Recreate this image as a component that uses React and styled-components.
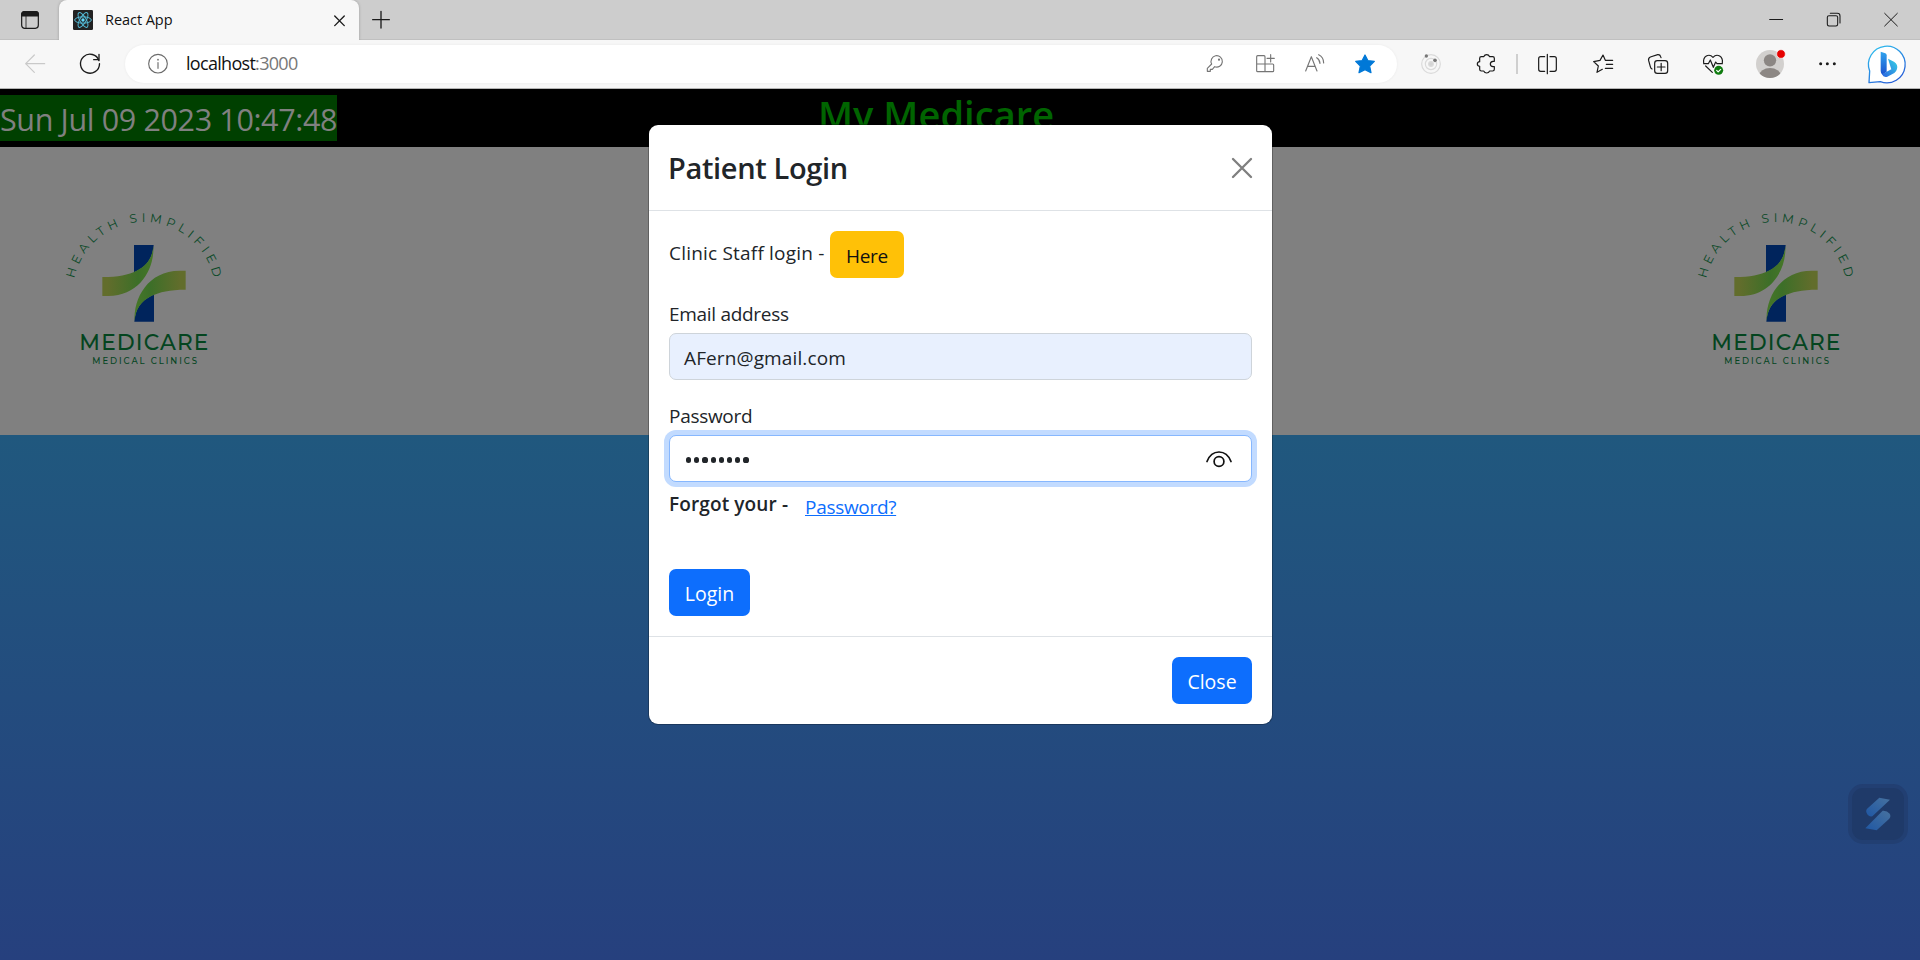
import React from "react";
import styled, { createGlobalStyle } from "styled-components";

const GlobalStyle = createGlobalStyle`
  * { box-sizing: border-box; }
  body {
    margin: 0;
    overflow: hidden;
    font-family: "Segoe UI", "Open Sans", "Noto Sans", sans-serif;
    color: #212529;
  }
  button, input { font-family: inherit; }
`;

const Window = styled.div`
  width: 1920px;
  height: 960px;
  display: flex;
  flex-direction: column;
  overflow: hidden;
`;

/* ---------- browser chrome ---------- */

const TabStrip = styled.div`
  height: 40px;
  flex: none;
  display: flex;
  align-items: stretch;
  background: #cdcdcd;
  box-shadow: inset 0 -1px 0 #c0c0c0;
`;

const TabActions = styled.div`
  width: 59px;
  display: flex;
  align-items: center;
  justify-content: center;
`;

const Tab = styled.div`
  width: 300px;
  height: 40px;
  display: flex;
  align-items: center;
  padding: 0 14px;
  background: #f7f7f7;
  border-radius: 8px 8px 0 0;
  box-shadow: 0 0 3px rgba(0, 0, 0, 0.25);
  clip-path: inset(0 -4px 0 -4px);
`;

const TabTitle = styled.span`
  flex: 1;
  margin-left: 12px;
  padding-bottom: 2px;
  font-size: 14.5px;
  letter-spacing: -0.05px;
  color: #111;
`;

const NewTab = styled.div`
  width: 43px;
  display: flex;
  align-items: center;
  justify-content: center;
`;

const WindowControls = styled.div`
  margin-left: auto;
  display: flex;
  align-items: center;
`;

const WindowButton = styled.div`
  width: 57.5px;
  display: flex;
  justify-content: center;
`;

const Toolbar = styled.div`
  height: 49px;
  flex: none;
  display: flex;
  align-items: center;
  background: #f7f7f7;
  border-bottom: 1px solid #b4b4b4;
`;

const Slot = styled.div`
  width: ${(p) => p.$w || 55}px;
  flex: none;
  height: 40px;
  display: flex;
  align-items: center;
  justify-content: center;
`;

const AddressBar = styled.div`
  flex: 1;
  height: 38px;
  margin-right: 6.5px;
  display: flex;
  align-items: center;
  padding: 0 7px 0 23px;
  border-radius: 19px;
  background: #fff;
  box-shadow: 0 0 3px rgba(0, 0, 0, 0.06);
`;

const Url = styled.span`
  flex: 1;
  margin-left: 18px;
  padding-bottom: 2px;
  font-size: 18px;
  letter-spacing: -0.7px;
  color: #111;
`;

const Port = styled.span`
  color: #777;
`;

const Divider = styled.div`
  width: 2px;
  height: 20px;
  margin: 0 2.5px;
  background: #cfcfcf;
`;

const Svg = styled.svg`
  display: block;
  flex: none;
  overflow: visible;
`;

function Icon({ color = "#1b1b1b", stroke = 3.6, size = 20, children }) {
  return (
    <Svg width={size} height={size} viewBox="0 0 60 60" fill="none" stroke={color} strokeWidth={stroke} strokeLinecap="round" strokeLinejoin="round">
      {children}
    </Svg>
  );
}

const ReactFavicon = () => (
  <Svg width="20" height="20" viewBox="0 0 60 60" fill="none" stroke="#53b8d3" strokeWidth="3">
    <rect width="60" height="60" rx="4" fill="#222" stroke="none" />
    <ellipse cx="30" cy="30" rx="25" ry="9.5" />
    <ellipse cx="30" cy="30" rx="25" ry="9.5" transform="rotate(60 30 30)" />
    <ellipse cx="30" cy="30" rx="25" ry="9.5" transform="rotate(120 30 30)" />
    <circle cx="30" cy="30" r="5" fill="#61dafb" stroke="none" />
  </Svg>
);

const BingLogo = () => (
  <Svg width="39" height="39" viewBox="0 0 117 117">
    <defs>
      <linearGradient id="bubble" x1="0" y1="0" x2="0.6" y2="1">
        <stop offset="0" stopColor="#2fc6f0" />
        <stop offset="1" stopColor="#2560d8" />
      </linearGradient>
      <linearGradient id="stem" x1="0" y1="0" x2="0" y2="1">
        <stop offset="0" stopColor="#2fa4ee" />
        <stop offset="1" stopColor="#1b53cf" />
      </linearGradient>
      <linearGradient id="bowl" x1="1" y1="0" x2="0" y2="1">
        <stop offset="0" stopColor="#35d3e6" />
        <stop offset="1" stopColor="#2a63e0" />
      </linearGradient>
    </defs>
    <path d="M3 113 L5 78 A55 55 0 1 1 37 110 Z" fill="#fff" stroke="url(#bubble)" strokeWidth="4" strokeLinejoin="round" />
    <path d="M38 20 L52 25 Q56 27 56 31 V80 L43 89 Q38 84 38 78 Z" fill="url(#stem)" />
    <path d="M60 41 L78 50 Q91 58 87 72 Q85 80 79 84 L58 95 Q46 98 42 88 L70 73 L66 61 Z" fill="url(#bowl)" />
  </Svg>
);

function BrowserTabs() {
  return (
    <TabStrip>
      <TabActions>
        <Icon>
          <rect x="5" y="5" width="50" height="50" rx="9" />
          <path d="M5 18 V13 Q5 5 13 5 H47 Q55 5 55 13 V18 Z" fill="#1b1b1b" />
          <path d="M18 18 V55" strokeWidth="2.5" />
        </Icon>
      </TabActions>
      <Tab>
        <ReactFavicon />
        <TabTitle>React App</TabTitle>
        <Icon size={11}>
          <path d="M4 6 L56 58 M56 6 L4 58" strokeWidth="7.5" />
        </Icon>
      </Tab>
      <NewTab>
        <Icon stroke={4}>
          <path d="M30 4 V54 M5 29 H55" />
        </Icon>
      </NewTab>
      <WindowControls>
        <WindowButton>
          <Icon stroke={3}><path d="M11 28.500 H50" /></Icon>
        </WindowButton>
        <WindowButton>
          <Icon stroke={3.2}>
            <rect x="10" y="17" width="31" height="31" rx="5" />
            <path d="M19 10 H40 Q48 10 48 18 V39" />
          </Icon>
        </WindowButton>
        <WindowButton>
          <Icon stroke={3}><path d="M11 10 L49 48 M49 10 L11 48" /></Icon>
        </WindowButton>
      </WindowControls>
    </TabStrip>
  );
}

function BrowserToolbar() {
  return (
    <Toolbar>
      <Slot $w={70}>
        <Icon color="#c9c9c9"><path d="M59 29 H2 M28 3 L2 29 L28 55" /></Icon>
      </Slot>
      <Slot $w={40}>
        <Icon stroke={4}>
          <path d="M57 20 A28.500 28.500 0 1 0 58.500 29" />
          <path d="M57 1 V17 H41" />
        </Icon>
      </Slot>
      <Slot $w={15} />
      <AddressBar>
        <Icon color="#6b6b6b" stroke={3.4}>
          <circle cx="30" cy="29" r="28" />
          <path d="M30 26 V43" />
          <circle cx="30" cy="17" r="1" fill="#6b6b6b" />
        </Icon>
        <Url>localhost<Port>:3000</Port></Url>
        <Slot $w={50}>
          <Icon color="#757575" stroke={3.4}>
            <path d="M20 30 L7 43 V52 H16 V46 H22 L29 38 A17 17 0 1 0 20 30 Z" />
            <circle cx="42" cy="17" r="1.6" />
          </Icon>
        </Slot>
        <Slot $w={50}>
          <Icon color="#757575" stroke={3.4}>
            <path d="M30 53 V8 Q30 5 27 5 H8 Q5 5 5 8 V50 Q5 53 8 53 H53 Q56 53 56 50 V33 Q56 30 53 30 H5 M47 2 V24 M36 13 H58" />
          </Icon>
        </Slot>
        <Slot $w={50}>
          <Icon color="#757575" stroke={3.4}>
            <path d="M2 51 L19 8 L36 51 M8 37 H30 M35 11 Q44 16 45 28 M41 2 Q56 9 56 27" />
          </Icon>
        </Slot>
        <Slot $w={50}>
          <Icon color="#0078d7">
            <path d="M30 3 L39 20 L58 22 L44 36 L48 56 L30 47 L12 56 L16 36 L2 22 L21 20 Z" fill="#0078d7" />
          </Icon>
        </Slot>
      </AddressBar>
      <Slot>
        <Icon color="#dadada" stroke={3.5}>
          <circle cx="30" cy="30" r="28" />
          <circle cx="30" cy="30" r="17" />
          <circle cx="30" cy="30" r="7" fill="#d4d4d4" />
          <circle cx="16" cy="6" r="5" fill="#777" stroke="none" />
          <circle cx="42" cy="19" r="5.5" fill="#777" stroke="none" />
        </Icon>
      </Slot>
      <Slot>
        <Icon>
          <path d="M16 8 H23 Q26 2 32 2 Q38 2 41 8 H50 Q55 8 55 13 V22 H51 Q43 23 43 30 Q43 37 51 38 H55 V46 Q55 51 50 51 H41 Q38 57 32 57 Q26 57 23 51 H16 Q11 51 11 46 V37 Q4 36 4 30 Q4 24 11 23 V13 Q11 8 16 8 Z" />
        </Icon>
      </Slot>
      <Divider />
      <Slot>
        <Icon>
          <path d="M20 8 H8 Q2 8 2 14 V46 Q2 52 8 52 H20 M28 1 V59 M36 8 H49 Q55 8 55 14 V46 Q55 52 49 52 H36" />
        </Icon>
      </Slot>
      <Slot>
        <Icon>
          <path d="M45 19 H37 L30 3 L21 19 L2 23 L16 36 L12 55 L28 46 M37 19 H59 M40 31 H59 M37 43 H59" />
        </Icon>
      </Slot>
      <Slot>
        <Icon>
          <rect x="20" y="20" width="39" height="38" rx="8" />
          <path d="M39.500 28 V50 M28 39 H51 M12 45 Q8 43 7 38 L2 20 Q0 12 7 9 L29 2 Q36 1 38 8 L39 11" />
        </Icon>
      </Slot>
      <Slot>
        <Icon>
          <path d="M2 26 Q0 12 10 6 Q21 0 30 10 Q39 0 50 6 Q60 12 58 26 M2 29 H16 L22 18 L31 40 L38 24 L42 29 H58 M8 36 L28 55" />
          <circle cx="47" cy="49" r="13.500" fill="#107c10" stroke="none" />
          <path d="M41 49 L45.500 53.500 L53 46" stroke="#fff" />
        </Icon>
      </Slot>
      <Slot $w={59}>
        <Svg width="28" height="28" viewBox="0 0 84 84">
          <clipPath id="face"><circle cx="42" cy="42" r="42" /></clipPath>
          <circle cx="42" cy="42" r="42" fill="#d2d0ce" />
          <circle cx="42" cy="31" r="18.500" fill="#8c8784" />
          <ellipse cx="42" cy="76" rx="32" ry="22" fill="#8c8784" clipPath="url(#face)" />
          <circle cx="75" cy="12" r="13" fill="#e60000" stroke="#f7f7f7" strokeWidth="2" />
        </Svg>
      </Slot>
      <Slot $w={57}>
        <Icon>
          <g fill="#1b1b1b" stroke="none">
            <circle cx="8" cy="29" r="4.500" />
            <circle cx="28" cy="29" r="4.500" />
            <circle cx="49" cy="29" r="4.500" />
          </g>
        </Icon>
      </Slot>
      <Slot $w={61}><BingLogo /></Slot>
      <Slot $w={2.5} />
    </Toolbar>
  );
}

/* ---------- page ---------- */

const Page = styled.main`
  position: relative;
  flex: 1;
  display: flex;
  flex-direction: column;
`;

const Banner = styled.header`
  height: 58px;
  flex: none;
  display: grid;
  grid-template-columns: 337px 1fr;
  padding-top: 6px;
  background: #000;
`;

const Clock = styled.div`
  height: 46px;
  background: #004000;
  color: #808080;
  font-size: 30.5px;
  line-height: 48px;
  letter-spacing: -0.36px;
  white-space: nowrap;
`;

const SiteTitle = styled.h1`
  margin: 0 0 0 481px;
  color: #006400;
  font-size: 38px;
  line-height: 38px;
  font-weight: 600;
  letter-spacing: 0.05px;
  white-space: nowrap;
`;

const LogoBand = styled.section`
  height: 288px;
  flex: none;
  display: flex;
  justify-content: space-between;
  align-items: flex-start;
  padding: 43px 38px 0 40px;
  background: #808080;
`;

const Backdrop = styled.section`
  flex: 1;
  background: linear-gradient(#20587e, #26407e);
`;

function MedicareLogo({ id }) {
  return (
    <Svg width="210" height="200" viewBox="0 0 630 600" fontFamily='Montserrat, "Inter", sans-serif'>
      <defs>
        <linearGradient id={`${id}-leaf`}>
          <stop offset="0.1" stopColor="#626d2c" />
          <stop offset="0.7" stopColor="#3c6f28" />
          <stop offset="1" stopColor="#467728" />
        </linearGradient>
        <path id={`${id}-arc`} d="M102.700 265.500 A214 214 0 0 1 521.300 265.500" />
      </defs>
      <text fontSize="37" fill="#0b4a28">
        <textPath href={`#${id}-arc`} textLength="580" lengthAdjust="spacing">HEALTH SIMPLIFIED</textPath>
      </text>
      <g fill="#00245c">
        <path d="M282 165 H341 C338 203 322 227 290 243 L282 247 Z" />
        <path d="M342 395 H283 C286 357 302 333 334 317 L342 313 Z" />
      </g>
      <path id={`${id}-ribbon`} fill={`url(#${id}-leaf)`} d="M187 261 C235 261 265 254 290 242 C322 226 337 202 340 168 C344 235 300 318 205 318 H187 Z" />
      <use href={`#${id}-ribbon`} transform="rotate(180 312 280)" />
      <g fill="#04451f" fontWeight="500">
        <text x="118" y="480" fontSize="65" textLength="387">MEDICARE</text>
        <text x="157" y="522" fontSize="25.500" textLength="314">MEDICAL CLINICS</text>
      </g>
    </Svg>
  );
}

/* ---------- login dialog ---------- */

const Dialog = styled.div`
  position: absolute;
  left: 649px;
  top: 36px;
  width: 623px;
  height: 599px;
  display: flex;
  flex-direction: column;
  background: #fff;
  border-radius: 9px;
  box-shadow: 0 0 0 1px rgba(0, 0, 0, 0.25);
  font-size: 19px;
  letter-spacing: -0.3px;
`;

const DialogHeader = styled.div`
  height: 86px;
  flex: none;
  display: flex;
  align-items: center;
  justify-content: space-between;
  padding: 0 20px 0 19px;
  border-bottom: 1px solid #dee2e6;
`;

const DialogTitle = styled.h2`
  margin: 0;
  font-size: 29px;
  font-weight: 600;
  letter-spacing: -0.35px;
`;

const DialogBody = styled.div`
  flex: 1;
  padding: 20px;
  display: flex;
  flex-direction: column;
`;

const StaffRow = styled.div`
  display: flex;
  align-items: flex-start;
  line-height: 45px;
`;

const StaffText = styled.span`
  width: 161px;
  letter-spacing: 0.2px;
  white-space: nowrap;
`;

const Button = styled.button`
  width: ${(p) => p.$w}px;
  height: 47px;
  padding: ${(p) => (p.$warning ? 3 : 2)}px 0 0;
  border: 0;
  border-radius: 7px;
  background: ${(p) => (p.$warning ? "#ffc107" : "#0d6efd")};
  color: ${(p) => (p.$warning ? "#111" : "#fff")};
  font-size: ${(p) => (p.$warning ? 19 : 19.5)}px;
  letter-spacing: ${(p) => (p.$warning ? -0.3 : 0)}px;
`;

const Label = styled.label`
  height: 55px;
  padding-top: 21px;
  line-height: 30px;
`;

const Field = styled.div`
  height: 47px;
  flex: none;
  display: flex;
  align-items: center;
  justify-content: space-between;
  padding: 2px 19px 0 14px;
  border: 1px solid ${(p) => (p.$focus ? "#86b7fe" : "#ced4da")};
  border-radius: 7px;
  background: ${(p) => (p.$filled ? "#e8f0fe" : "#fff")};
  box-shadow: ${(p) => (p.$focus ? "0 0 0 5px #c2dbff" : "none")};
  letter-spacing: 0.12px;
`;

const Dots = styled.span`
  display: flex;
  gap: 3px;
  padding: 1px 0 0 2px;
`;

const Dot = styled.i`
  width: 5.2px;
  height: 5.2px;
  border-radius: 50%;
  background: #212529;
`;

const ForgotRow = styled.div`
  height: 87px;
  display: flex;
  align-items: flex-start;
  padding-top: 7px;
  line-height: 30px;
`;

const ForgotText = styled.span`
  width: 136px;
  font-weight: 600;
  letter-spacing: 0.12px;
  white-space: nowrap;
`;

const ForgotLink = styled.a`
  margin-top: 3px;
  color: #0d6efd;
  text-decoration: underline;
`;

const DialogFooter = styled.div`
  height: 88px;
  flex: none;
  display: flex;
  align-items: center;
  justify-content: flex-end;
  padding: 0 20px;
  border-top: 1px solid #dee2e6;
`;

function LoginDialog() {
  return (
    <Dialog>
      <DialogHeader>
        <DialogTitle>Patient Login</DialogTitle>
        <Icon color="#7f7f7f" stroke={7} size={20}>
          <path d="M3 3 L57 57 M57 3 L3 57" />
        </Icon>
      </DialogHeader>
      <DialogBody>
        <StaffRow>
          <StaffText>Clinic Staff login -</StaffText>
          <Button $w={74} $warning>Here</Button>
        </StaffRow>
        <Label>Email address</Label>
        <Field $filled>AFern@gmail.com</Field>
        <Label>Password</Label>
        <Field $focus>
          <Dots>{Array.from({ length: 8 }, (_, i) => <Dot key={i} />)}</Dots>
          <Svg width="26" height="17" viewBox="0 0 26 17" fill="none" stroke="#111" strokeWidth="1.7" strokeLinecap="round">
            <path d="M1 10.500 C3.500 4 8 1 13 1 C18 1 22.500 4 25 10.500" />
            <circle cx="13" cy="10.500" r="4.900" />
          </Svg>
        </Field>
        <ForgotRow>
          <ForgotText>Forgot your -</ForgotText>
          <ForgotLink>Password?</ForgotLink>
        </ForgotRow>
        <Button $w={81}>Login</Button>
      </DialogBody>
      <DialogFooter>
        <Button $w={80}>Close</Button>
      </DialogFooter>
    </Dialog>
  );
}

/* ---------- floating assistant badge ---------- */

const AssistBadge = styled.div`
  position: absolute;
  right: 12px;
  bottom: 116px;
  width: 60px;
  height: 60px;
  display: flex;
  align-items: center;
  justify-content: center;
  border: 4px solid #223f72;
  border-radius: 15px;
  background: #1f3a69;
`;

const AssistMark = () => (
  <Svg width="26" height="34" viewBox="0 0 78 102">
    <defs>
      <linearGradient id="assist" x1="1" y1="0" x2="0" y2="1">
        <stop offset="0" stopColor="#47729f" />
        <stop offset="1" stopColor="#1f57a4" />
      </linearGradient>
    </defs>
    <path d="M43 2 L75 8 L22 58 Q10 60 5 48 Q1 40 8 34 Z" fill="url(#assist)" />
    <path d="M35 100 L1 94 L53 41 Q66 40 74 50 Q79 58 72 66 Z" fill="url(#assist)" />
  </Svg>
);

export default function App() {
  return (
    <>
      <GlobalStyle />
      <Window>
        <BrowserTabs />
        <BrowserToolbar />
        <Page>
          <Banner>
            <Clock>Sun Jul 09 2023 10:47:48</Clock>
            <SiteTitle>My Medicare</SiteTitle>
          </Banner>
          <LogoBand>
            <MedicareLogo id="left" />
            <MedicareLogo id="right" />
          </LogoBand>
          <Backdrop />
          <LoginDialog />
          <AssistBadge><AssistMark /></AssistBadge>
        </Page>
      </Window>
    </>
  );
}
